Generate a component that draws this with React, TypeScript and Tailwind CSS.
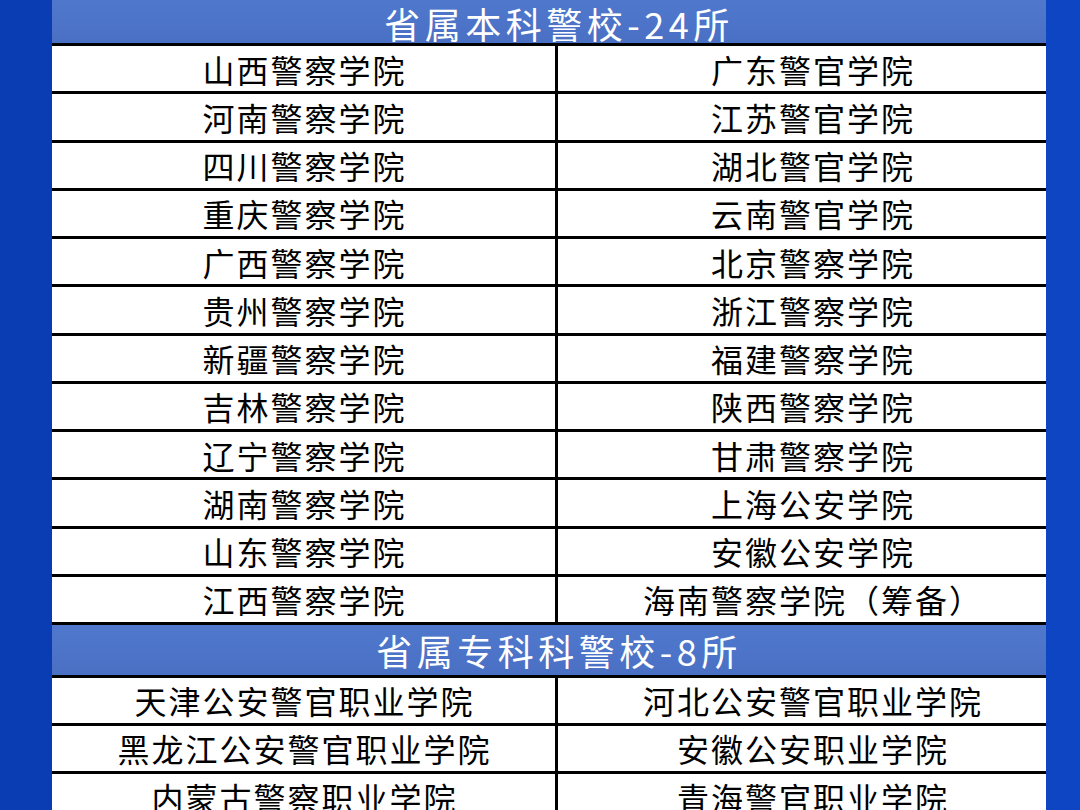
const benke: [string, string][] = [
  ["山西警察学院", "广东警官学院"],
  ["河南警察学院", "江苏警官学院"],
  ["四川警察学院", "湖北警官学院"],
  ["重庆警察学院", "云南警官学院"],
  ["广西警察学院", "北京警察学院"],
  ["贵州警察学院", "浙江警察学院"],
  ["新疆警察学院", "福建警察学院"],
  ["吉林警察学院", "陕西警察学院"],
  ["辽宁警察学院", "甘肃警察学院"],
  ["湖南警察学院", "上海公安学院"],
  ["山东警察学院", "安徽公安学院"],
  ["江西警察学院", "海南警察学院（筹备）"],
];

const zhuanke: [string, string][] = [
  ["天津公安警官职业学院", "河北公安警官职业学院"],
  ["黑龙江公安警官职业学院", "安徽公安职业学院"],
  ["内蒙古警察职业学院", "青海警官职业学院"],
];

const font = { fontFamily: '"Noto Sans CJK SC", "Noto Sans", sans-serif' };

const Row = ({ left, right }: { left: string; right: string }) => (
  <div className="grid grid-cols-[506px_1fr] h-[48.25px] shrink-0 border-b-[3px] border-black bg-white">
    <div className="flex items-center justify-center pl-[2px] border-r-[3px] border-black text-[32px] tracking-[2px] text-black leading-none whitespace-nowrap">
      {left}
    </div>
    <div className="flex items-center justify-center pl-[22px] text-[32px] tracking-[2px] text-black leading-none whitespace-nowrap">
      {right}
    </div>
  </div>
);

const Header = ({ title, h }: { title: string; h: string }) => (
  <div
    className={`flex shrink-0 items-center justify-center pl-[20px] bg-gradient-to-b from-[#4f78cc] to-[#4a70c4] border-b-[3px] border-black text-white text-[36px] tracking-[4.5px] leading-none whitespace-nowrap ${h}`}
  >
    {title}
  </div>
);

export default function App() {
  return (
    <div className="w-[1080px] h-[810px] overflow-hidden bg-[#0c40bb] flex" style={font}>
      <div className="w-[52px] bg-[#0a3cb4]" />
      <div className="w-[994px] flex flex-col">
        <Header title="省属本科警校-24所" h="h-[46px] pt-[2px]" />
        {benke.map(([l, r]) => (
          <Row key={l} left={l} right={r} />
        ))}
        <Header title="省属专科科警校-8所" h="h-[52.5px]" />
        {zhuanke.map(([l, r]) => (
          <Row key={l} left={l} right={r} />
        ))}
      </div>
      <div className="flex-1 bg-[#0d45c2]" />
    </div>
  );
}
